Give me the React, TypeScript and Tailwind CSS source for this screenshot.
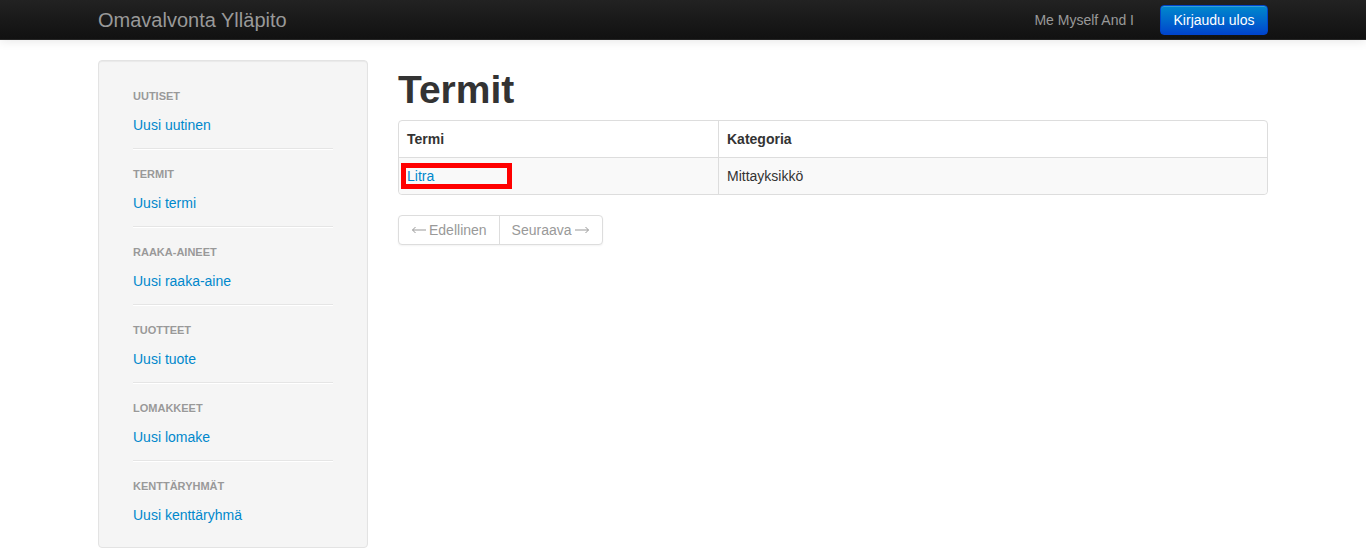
import React from "react";

const sections = [
    { header: "Uutiset", link: "Uusi uutinen" },
    { header: "Termit", link: "Uusi termi" },
    { header: "Raaka-aineet", link: "Uusi raaka-aine" },
    { header: "Tuotteet", link: "Uusi tuote" },
    { header: "Lomakkeet", link: "Uusi lomake" },
    { header: "Kenttäryhmät", link: "Uusi kenttäryhmä" },
];

const Navbar = () => (
    <div className="h-10 bg-gradient-to-b from-[#222222] to-[#111111] border-b border-[#252525] shadow-[0_1px_10px_rgba(0,0,0,0.1)]">
        <div className="w-[1170px] mx-auto flex items-center justify-between h-full">
            <a className="text-[20px] leading-5 text-[#999999] pt-px">Omavalvonta Ylläpito</a>
            <div className="flex items-center">
                <span className="text-[14px] leading-5 text-[#999999] mr-[26px]">Me Myself And I</span>
                <button className="w-[108px] h-[30px] text-[14px] leading-5 text-white rounded-[4px] border border-[#0044cc] bg-gradient-to-b from-[#0088cc] to-[#0044cc] shadow-[inset_0_1px_0_rgba(255,255,255,0.2)]">
                    Kirjaudu ulos
                </button>
            </div>
        </div>
    </div>
);

const Sidebar = () => (
    <div className="w-[270px] shrink-0 h-[488px] bg-[#f5f5f5] border border-[#e3e3e3] rounded-[4px] pt-[22px] pb-[19px] px-[19px] shadow-[inset_0_1px_1px_rgba(0,0,0,0.05)]">
        {sections.map((s, i) => (
            <div key={s.header}>
                <div className="px-[15px] py-[3px] text-[11px] leading-5 font-bold uppercase text-[#999999] [text-shadow:0_1px_0_rgba(255,255,255,0.5)]">
                    {s.header}
                </div>
                <a className="block mt-[3px] px-[15px] py-[3px] text-[14px] leading-5 text-[#0088cc]">{s.link}</a>
                {i < sections.length - 1 && (
                    <div className="mt-[10px] mb-[11px] mx-[15px] h-px bg-[#e5e5e5] border-b border-white box-content" />
                )}
            </div>
        ))}
    </div>
);

const Arrow = ({ left }: { left?: boolean }) => (
    <svg width="16" height="10" viewBox="0 0 16 10" className={left ? "" : "rotate-180"}>
        <path d="M1.5 5H15" stroke="#999999" strokeWidth="1" fill="none" />
        <path d="M4.5 2L1.5 5L4.5 8" stroke="#999999" strokeWidth="1" fill="none" />
    </svg>
);

const Content = () => (
    <div className="flex-1 ml-[30px]">
        <h1 className="my-[10px] text-[39px] leading-10 font-bold text-[#333333]">Termit</h1>
        <table className="w-full border-separate border-spacing-0 border border-[#dddddd] rounded-[4px] text-[14px] leading-5 text-[#333333] mb-5">
            <thead>
                <tr>
                    <th className="w-[319px] p-2 text-left font-bold">Termi</th>
                    <th className="p-2 text-left font-bold border-l border-[#dddddd]">Kategoria</th>
                </tr>
            </thead>
            <tbody>
                <tr className="bg-[#f9f9f9]">
                    <td className="relative p-2 border-t border-[#dddddd] rounded-bl-[4px]">
                        <a className="text-[#0088cc]">Litra</a>
                        <div className="absolute left-[2px] top-[5px] w-[111px] h-[26px] border-[5px] border-[#ff0000]" />
                    </td>
                    <td className="p-2 border-t border-l border-[#dddddd] rounded-br-[4px]">Mittayksikkö</td>
                </tr>
            </tbody>
        </table>
        <div className="inline-flex rounded-[4px] border border-[#dddddd] shadow-[0_1px_2px_rgba(0,0,0,0.05)] bg-white text-[14px] leading-5 text-[#999999]">
            <span className="flex items-center gap-[2px] px-[12px] py-[4px]"><Arrow left />Edellinen</span>
            <span className="flex items-center gap-[2px] px-[12px] py-[4px] border-l border-[#dddddd]">Seuraava<Arrow /></span>
        </div>
    </div>
);

export default function App() {
    return (
        <div className="min-h-[552px] bg-white font-['Liberation_Sans',Arial,sans-serif]">
            <Navbar />
            <div className="w-[1170px] mx-auto flex pt-5">
                <Sidebar />
                <Content />
            </div>
        </div>
    );
}
